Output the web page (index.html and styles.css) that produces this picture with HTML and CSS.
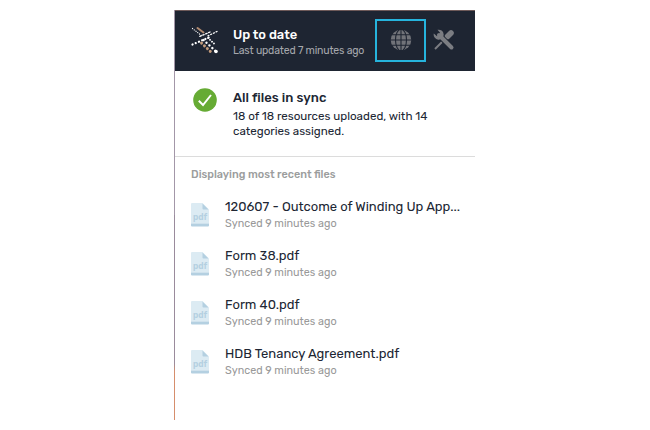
FILE: index.html
```html
<!DOCTYPE html>
<html lang="en">
<head>
<meta charset="utf-8">
<title>Sync status</title>
<link rel="stylesheet" href="styles.css">
</head>
<body>
<main class="panel">
  <header class="header">
    <svg class="logo" viewBox="0 0 28 28">
      <g fill="none" stroke-linecap="round">
        <path d="M1.500 2.500L11 10" stroke="#fff" stroke-width="1.200" stroke-dasharray=".1 2.100"/>
        <path d="M6.500 2L12.500 6.500" stroke="#b08a70" stroke-width="2"/>
        <path d="M26 5.500L16 10.300" stroke="#fff" stroke-width="1.300" stroke-dasharray="1 2"/>
        <path d="M19 6L8 10.800" stroke="#fff" stroke-width="1.300" stroke-dasharray="1.500 1.700"/>
        <path d="M1.500 18.500L19 11" stroke="#fff" stroke-width="2.200" stroke-dasharray=".1 3.400"/>
        <path d="M12.500 14L25 25.500" stroke="#fff" stroke-width="2.400" stroke-dasharray=".1 3.900"/>
        <path d="M10.500 17L19.500 25.500" stroke="#c29b7c" stroke-width="3" stroke-dasharray=".1 3.900"/>
        <path d="M17 12L23 17.500" stroke="#fff" stroke-width="1.800" stroke-dasharray=".1 2.600"/>
        <circle cx="25" cy="25.500" r="1.800" fill="#fff"/>
      </g>
    </svg>
    <div class="header-text">
      <h1 class="header-title">Up to date</h1>
      <p class="header-sub">Last updated 7 minutes ago</p>
    </div>
    <button class="tool tool-active" aria-label="Web">
      <svg class="globe" viewBox="0 0 22 22">
        <circle cx="11" cy="11" r="10.300" fill="#717379"/>
        <g fill="none" stroke="#1e2532" stroke-width="1.100">
          <path d="M11 0V22M0 11H22M2 5.800H20M2 16.200H20"/>
          <ellipse cx="11" cy="11" rx="5.500" ry="10.800"/>
        </g>
      </svg>
    </button>
    <button class="tool" aria-label="Settings">
      <svg class="tools" viewBox="0 0 22 22">
        <path d="M2 20L9 13" stroke="#7b7d82" stroke-width="2" fill="none"/>
        <path d="M14.500 7.500L18 4" stroke="#7b7d82" stroke-width="5.600" stroke-linecap="round"/>
        <path d="M7 7L19 19" stroke="#1e2532" stroke-width="6" stroke-linecap="round"/>
        <path d="M6 6L18.500 18.500" stroke="#7b7d82" stroke-width="4" stroke-linecap="round"/>
        <path d="M4.500 .8A5 5 0 1 1 .8 4.500L4 7.200L7.200 4Z" fill="#7b7d82"/>
      </svg>
    </button>
  </header>
  <section class="status">
    <svg class="check" viewBox="0 0 24 24">
      <circle cx="12" cy="12" r="11.800" fill="#66ab34"/>
      <path d="M5.800 12.800L10 17L18 7" fill="none" stroke="#fff" stroke-width="2"/>
    </svg>
    <div>
      <h2 class="status-title">All files in sync</h2>
      <p class="status-text">18 of 18 resources uploaded, with 14<br>categories assigned.</p>
    </div>
  </section>
  <section class="files">
    <h3 class="files-heading">Displaying most recent files</h3>
    <ul class="file-list">
      <li class="file">
        <svg class="file-icon" viewBox="0 0 18 24"><path class="sheet" d="M1 0H11.500L18 6.500V20.500H0V1Q0 0 1 0Z"/><path class="fold" d="M11.500 .5V5.500Q11.500 6.500 12.500 6.500H17.500ZM0 20.500H18V22.500Q18 23.500 17 23.500H1Q0 23.500 0 22.500Z"/><text x="9" y="16.500" class="file-type">pdf</text></svg>
        <div><p class="file-name">120607 - Outcome of Winding Up App...</p><p class="file-sub">Synced 9 minutes ago</p></div>
      </li>
      <li class="file">
        <svg class="file-icon" viewBox="0 0 18 24"><path class="sheet" d="M1 0H11.500L18 6.500V20.500H0V1Q0 0 1 0Z"/><path class="fold" d="M11.500 .5V5.500Q11.500 6.500 12.500 6.500H17.500ZM0 20.500H18V22.500Q18 23.500 17 23.500H1Q0 23.500 0 22.500Z"/><text x="9" y="16.500" class="file-type">pdf</text></svg>
        <div><p class="file-name">Form 38.pdf</p><p class="file-sub">Synced 9 minutes ago</p></div>
      </li>
      <li class="file">
        <svg class="file-icon" viewBox="0 0 18 24"><path class="sheet" d="M1 0H11.500L18 6.500V20.500H0V1Q0 0 1 0Z"/><path class="fold" d="M11.500 .5V5.500Q11.500 6.500 12.500 6.500H17.500ZM0 20.500H18V22.500Q18 23.500 17 23.500H1Q0 23.500 0 22.500Z"/><text x="9" y="16.500" class="file-type">pdf</text></svg>
        <div><p class="file-name">Form 40.pdf</p><p class="file-sub">Synced 9 minutes ago</p></div>
      </li>
      <li class="file">
        <svg class="file-icon" viewBox="0 0 18 24"><path class="sheet" d="M1 0H11.500L18 6.500V20.500H0V1Q0 0 1 0Z"/><path class="fold" d="M11.500 .5V5.500Q11.500 6.500 12.500 6.500H17.500ZM0 20.500H18V22.500Q18 23.500 17 23.500H1Q0 23.500 0 22.500Z"/><text x="9" y="16.500" class="file-type">pdf</text></svg>
        <div><p class="file-name">HDB Tenancy Agreement.pdf</p><p class="file-sub">Synced 9 minutes ago</p></div>
      </li>
    </ul>
  </section>
</main>
</body>
</html>
```
FILE: styles.css
```css
* { box-sizing: border-box; margin: 0; padding: 0; }
body { background: #fff; font-family: Rubik, Roboto, sans-serif; color: #202633; }
.panel {
  width: 301px; height: 410px; margin: 10px 0 0 174px;
  border-left: 1px solid;
  border-image: linear-gradient(#a397a8 0 50%, #9a8b9c 50% 86%, #d68e6c 88%) 1;
}
.header {
  display: flex; align-items: center; height: 61px; padding: 0 0 2px 16px;
  background: #1e2532; border-top: 1px solid #6e5a59;
}
.logo { width: 28px; height: 28px; margin-right: 14px; flex: none; }
.header-text { width: 142px; flex: none; white-space: nowrap; padding-top: 5px; }
.header-title { font-size: 13px; line-height: 16px; font-weight: 500; color: #fff; letter-spacing: -.05px; }
.header-sub { font-size: 10.5px; line-height: 15px; color: #a6a8ad; letter-spacing: -.17px; }
.tool {
  display: flex; align-items: center; justify-content: center;
  width: 36px; height: 43px; background: none; border: 0; flex: none;
}
.tool-active { width: 51px; border: 2px solid #26b4dd; }
.globe, .tools { width: 22px; height: 22px; }
.status {
  display: flex; height: 86px; padding: 17px 0 0 18px; gap: 16px;
  border-bottom: 1px solid #dcdcdc;
}
.check { width: 24px; height: 24px; flex: none; }
.status-title { font-size: 13px; line-height: 19px; font-weight: 500; letter-spacing: .06px; }
.status-text { font-size: 11.6px; line-height: 15px; margin-top: 2px; white-space: nowrap; }
.files { padding: 10px 0 0 16px; }
.files-heading { font-size: 10.87px; line-height: 15px; font-weight: 500; color: #9b9d9d; }
.file-list { list-style: none; padding-top: 16px; }
.file { display: flex; height: 49px; gap: 16px; white-space: nowrap; }
.file-icon { width: 18px; height: 24px; margin-top: 5px; flex: none; }
.sheet { fill: #dcebf3; }
.fold { fill: #b4d0e1; }
.file-type { font: 600 8.5px Rubik, Roboto, sans-serif; fill: #b4d0e1; text-anchor: middle; }
.file-name { font-size: 13px; line-height: 18px; }
.file-sub { font-size: 10.8px; line-height: 16px; color: #999; }
```
